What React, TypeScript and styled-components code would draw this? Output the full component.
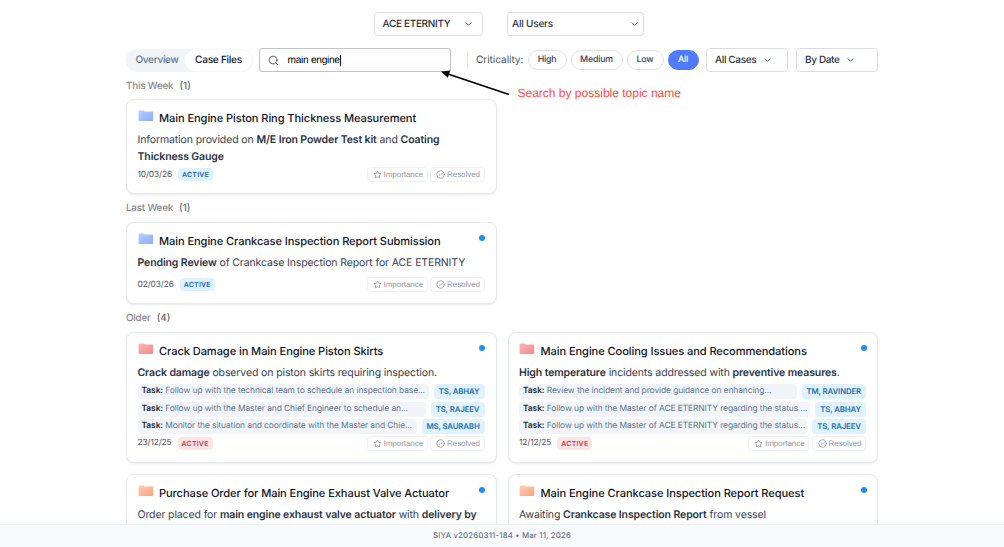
import React from 'react';
import styled, { createGlobalStyle } from 'styled-components';

const Global = createGlobalStyle`
  * { box-sizing: border-box; }
  html, body { margin: 0; padding: 0; }
  body {
    background: #fff;
    font-family: Inter, "Liberation Sans", sans-serif;
    color: #1f2937;
    overflow: hidden;
    -webkit-font-smoothing: antialiased;
    text-rendering: geometricPrecision;
  }
`;

const Page = styled.div`
  position: relative;
  height: 547px;
  display: flex;
  flex-direction: column;
  overflow: hidden;
`;

const Main = styled.main`
  flex: 1;
  min-height: 0;
  overflow: hidden;
  width: 752px;
  margin-left: 126px;
`;

const TopBar = styled.div`
  display: flex;
  gap: 24px;
  padding: 12px 0 0 247.5px;
  height: 48px;
`;

const Select = styled.div<{ $w: number; $pad: string; $ls?: number; $gap?: number }>`
  display: flex;
  align-items: center;
  justify-content: ${p => (p.$gap ? 'flex-start' : 'space-between')};
  gap: ${p => p.$gap ?? 0}px;
  width: ${p => p.$w}px;
  height: 24px;
  padding: ${p => p.$pad};
  border: 1px solid #d9dce2;
  border-radius: 3.5px;
  font-size: 10px;
  font-weight: 500;
  letter-spacing: ${p => p.$ls ?? 0}px;
  color: #2b303b;
  white-space: nowrap;
  svg { flex: none; }
`;

const Spacer = styled.span`
  flex: 1;
`;

const Toolbar = styled.div`
  display: flex;
  align-items: center;
  height: 24px;
`;

const Tabs = styled.div`
  display: flex;
  width: 127px;
  height: 23px;
  border-radius: 12px;
  background: #f1f5f9;
  margin-right: 6px;
`;

const Tab = styled.div<{ $active?: boolean }>`
  display: flex;
  align-items: center;
  justify-content: center;
  width: ${p => (p.$active ? 69 : 58)}px;
  padding: 0 0 1px ${p => (p.$active ? 0 : 4)}px;
  border-radius: 12px;
  background: ${p => (p.$active ? '#fff' : 'transparent')};
  border: 1px solid ${p => (p.$active ? '#f5f7fa' : 'transparent')};
  color: ${p => (p.$active ? '#12161f' : '#64748b')};
  font-size: 10.1px;
  letter-spacing: ${p => (p.$active ? -0.28 : -0.33)}px;
  font-weight: 500;
  white-space: nowrap;
`;

const Search = styled.div`
  display: flex;
  align-items: center;
  width: 192px;
  height: 24px;
  padding: 0 0 0 8px;
  border: 1px solid #bfc3c9;
  border-radius: 3px;
  font: 10.2px "Liberation Sans", Arial, sans-serif;
  letter-spacing: -0.3px;
  color: #000;
  svg { margin-right: 8.5px; }
`;

const Caret = styled.i`
  width: 1px;
  height: 11px;
  background: #111;
`;

const Divider = styled.div`
  width: 1px;
  height: 20px;
  background: #e5e7eb;
  margin: 0 8px 0 16px;
`;

const FilterLabel = styled.span`
  width: 51.5px;
  font-size: 10.1px;
  letter-spacing: -0.06px;
  color: #4b5563;
  white-space: nowrap;
`;

const Pill = styled.div<{ $w: number; $on?: boolean }>`
  display: flex;
  align-items: center;
  justify-content: center;
  width: ${p => p.$w}px;
  height: 20px;
  padding-bottom: 1px;
  margin-right: 4px;
  border-radius: 10px;
  border: 1px solid ${p => (p.$on ? '#4f7cff' : '#dfe3e9')};
  background: ${p => (p.$on ? '#4f7cff' : '#fff')};
  color: ${p => (p.$on ? '#fff' : '#374151')};
  font-size: 8.8px;
  letter-spacing: -0.2px;
  font-weight: 500;
`;

const GroupTitle = styled.h2<{ $h: number }>`
  display: flex;
  align-items: center;
  gap: 6px;
  height: ${p => p.$h}px;
  margin: 0;
  font-size: 9.9px;
  letter-spacing: -0.22px;
  font-weight: 500;
  color: #8a8a8e;
  span { color: #6b6b70; letter-spacing: 0; }
`;

const Grid = styled.div`
  display: grid;
  grid-template-columns: 370.5px 370.5px;
  gap: 11px;
`;

const CardBox = styled.article<{ $h: number }>`
  display: flex;
  flex-direction: column;
  height: ${p => p.$h}px;
  padding: 10px 11px 0 10.5px;
  border: 1px solid #e6e9ed;
  border-radius: 8px;
  background: #fff;
  box-shadow: 0 1px 2px rgba(0, 0, 0, 0.09);
`;

const CardHead = styled.header`
  display: flex;
  height: 17px;
`;

const CardTitle = styled.h3`
  flex: 1;
  margin: 0 0 0 5.5px;
  font-size: 11.1px;
  line-height: 17px;
  font-weight: 500;
  letter-spacing: -0.085px;
  color: #12161f;
  white-space: nowrap;
`;

const Dot = styled.i`
  width: 6px;
  height: 6px;
  margin: 2.5px -0.5px 0 0;
  border-radius: 50%;
  background: #1f8ff5;
`;

const Summary = styled.p<{ $mb: number }>`
  margin: 5px 0 ${p => p.$mb}px;
  font-size: 10.5px;
  line-height: 16.4px;
  letter-spacing: -0.115px;
  color: #374151;
  white-space: nowrap;
  b { font-weight: 600; color: #2a3342; }
`;

const TaskList = styled.div`
  display: flex;
  flex-direction: column;
  gap: 2.5px;
  padding: 0.8px 0 1.6px;
`;

const TaskRow = styled.div`
  display: flex;
  gap: 5px;
  height: 15px;
`;

const TaskText = styled.div`
  flex: 1;
  min-width: 0;
  padding-left: 4px;
  border-radius: 4px;
  background: #f1f5f9;
  font-size: 8.45px;
  letter-spacing: -0.1px;
  line-height: 15px;
  color: #64748b;
  white-space: nowrap;
  b { font-weight: 600; color: #1f2937; }
`;

const Owner = styled.div<{ $w: number }>`
  width: ${p => p.$w}px;
  border-radius: 4px;
  background: #e0f2fe;
  color: #1f6fae;
  font-size: 7.8px;
  letter-spacing: -0.12px;
  line-height: 15px;
  font-weight: 600;
  text-align: center;
  white-space: nowrap;
`;

const CardFoot = styled.footer`
  display: flex;
  align-items: center;
  height: 15px;
`;

const DateText = styled.span`
  font-size: 8.4px;
  letter-spacing: -0.12px;
  color: #52525b;
`;

const Status = styled.span<{ $red?: boolean }>`
  width: 35px;
  height: 13px;
  margin-left: 6px;
  border-radius: 4px;
  background: ${p => (p.$red ? '#fee4e6' : '#e0f2fe')};
  color: ${p => (p.$red ? '#d23a3f' : '#1d64c0')};
  font-size: 7px;
  font-weight: 600;
  line-height: 13px;
  letter-spacing: 0.2px;
  text-align: center;
`;

const Action = styled.div<{ $w: number }>`
  display: flex;
  align-items: center;
  width: ${p => p.$w}px;
  height: 15px;
  margin-left: 2.5px;
  padding-left: 5px;
  gap: 2px;
  border: 1px solid #eef0f3;
  border-radius: 3.5px;
  font: 8px "Liberation Sans", Arial, sans-serif;
  letter-spacing: -0.04px;
  color: #94969d;
  white-space: nowrap;
`;

const StatusBar = styled.footer`
  flex: none;
  display: flex;
  justify-content: center;
  height: 23px;
  line-height: 21px;
  background: #f8fafc;
  border-top: 1px solid #edf0f4;
  color: #64748b;
  font-size: 7.8px;
  font-weight: 500;
  letter-spacing: 0.18px;
`;

const Note = styled.div`
  position: absolute;
  left: 517.5px;
  top: 86px;
  font: 12px/14px "Liberation Sans", Arial, sans-serif;
  color: #ff4a3d;
  white-space: nowrap;
`;

const Arrow = styled.svg`
  position: absolute;
  left: 436px;
  top: 66px;
`;

const Chevron = () => (
  <svg width="7" height="6" viewBox="0 0 7 6" fill="none" stroke="#4b5563" strokeWidth="1" strokeLinecap="round" strokeLinejoin="round">
    <path d="M1 1.8 3.5 4.3 6 1.8" />
  </svg>
);

const folderColors = {
  blue: ['#b9ceff', '#8badff'],
  red: ['#fbb4b4', '#f58a8c'],
  orange: ['#fdcfb2', '#fba27c'],
};
type Tone = keyof typeof folderColors;

const Folder = ({ tone }: { tone: Tone }) => (
  <svg width="16" height="13" viewBox="0 0 16 13">
    <defs>
      <linearGradient id={`folder-${tone}`} x1="0" y1="0" x2="1" y2="1">
        <stop offset="0" stopColor={folderColors[tone][0]} />
        <stop offset="1" stopColor={folderColors[tone][1]} />
      </linearGradient>
    </defs>
    <path d="M.6 1.3a.9.9 0 0 1 .9-.9h4l1.3 1h7.6a.8.8 0 0 1 .8.8v7.9a.9.9 0 0 1-.9.9H1.5a.9.9 0 0 1-.9-.9z" fill={`url(#folder-${tone})`} />
  </svg>
);

type Task = { text: string; owner: string; w: number };
type CardProps = {
  tone: Tone;
  title: string;
  body: React.ReactNode;
  h: number;
  mb?: number;
  date?: string;
  unread?: boolean;
  tasks?: Task[];
};

const Card = ({ tone, title, body, h, mb = 2, date, unread, tasks }: CardProps) => (
  <CardBox $h={h}>
    <CardHead>
      <Folder tone={tone} />
      <CardTitle>{title}</CardTitle>
      {unread && <Dot />}
    </CardHead>
    <Summary $mb={mb}>{body}</Summary>
    {tasks && (
      <TaskList>
        {tasks.map(t => (
          <TaskRow key={t.text + t.owner}>
            <TaskText><b>Task:</b> {t.text}</TaskText>
            <Owner $w={t.w}>{t.owner}</Owner>
          </TaskRow>
        ))}
      </TaskList>
    )}
    {date && (
      <CardFoot>
        <DateText>{date}</DateText>
        <Status $red={tone === 'red'}>ACTIVE</Status>
        <Spacer />
        <Action $w={61}>
          <svg width="9" height="9" viewBox="0 0 24 24" fill="none" stroke="#8b8e96" strokeWidth="2" strokeLinejoin="round">
            <path d="M12 2.5l2.9 6.2 6.8.8-5 4.7 1.3 6.8-6-3.4-6 3.4 1.3-6.8-5-4.7 6.8-.8z" />
          </svg>
          Importance
        </Action>
        <Action $w={54.5}>
          <svg width="9" height="9" viewBox="0 0 24 24" fill="none" stroke="#8b8e96" strokeWidth="2" strokeLinecap="round">
            <circle cx="12" cy="12" r="10" />
            <path d="M8.5 12.5l2.3 2.2 4.7-5" />
          </svg>
          Resolved
        </Action>
      </CardFoot>
    )}
  </CardBox>
);

const SortSelect = styled(Select)`
  margin-left: 8px;
`;

export default function App() {
  return (
    <Page>
      <Global />
      <Main>
        <TopBar>
          <Select $w={109.5} $pad="0 10px 1px 8px" $ls={-0.32}>ACE ETERNITY<Chevron /></Select>
          <Select $w={137} $pad="0 5.5px 0 4px" $ls={-0.2}>All Users<Chevron /></Select>
        </TopBar>
        <Toolbar>
          <Tabs>
            <Tab>Overview</Tab>
            <Tab $active>Case Files</Tab>
          </Tabs>
          <Search>
            <svg width="11" height="11" viewBox="0 0 24 24" fill="none" stroke="#555" strokeWidth="2" strokeLinecap="round">
              <circle cx="11" cy="11" r="8.5" />
              <path d="M17.5 17.5 21.5 21.5" />
            </svg>
            main engine<Caret />
          </Search>
          <Divider />
          <FilterLabel>Criticality:</FilterLabel>
          <Pill $w={39}>High</Pill>
          <Pill $w={52}>Medium</Pill>
          <Pill $w={37}>Low</Pill>
          <Pill $w={31} $on>All</Pill>
          <Spacer />
          <Select $w={82} $pad="0 0 1px 8px" $ls={-0.36} $gap={7.5}>All Cases<Chevron /></Select>
          <SortSelect $w={82} $pad="0 0 1px 8px" $ls={-0.36} $gap={7.5}>By Date<Chevron /></SortSelect>
        </Toolbar>

        <GroupTitle $h={27.4}>This Week <span>(1)</span></GroupTitle>
        <Grid>
          <Card tone="blue" h={94.6} date="10/03/26"
            title="Main Engine Piston Ring Thickness Measurement"
            body={<>Information provided on <b>M/E Iron Powder Test kit</b> and <b>Coating<br />Thickness Gauge</b></>} />
        </Grid>
        <GroupTitle $h={28}>Last Week <span>(1)</span></GroupTitle>
        <Grid>
          <Card tone="blue" h={82} mb={6} unread date="02/03/26"
            title="Main Engine Crankcase Inspection Report Submission"
            body={<><b>Pending Review</b> of Crankcase Inspection Report for ACE ETERNITY</>} />
        </Grid>
        <GroupTitle $h={28}>Older <span>(4)</span></GroupTitle>
        <Grid>
          <Card tone="red" h={131} unread date="23/12/25"
            title="Crack Damage in Main Engine Piston Skirts"
            body={<><b>Crack damage</b> observed on piston skirts requiring inspection.</>}
            tasks={[
              { text: 'Follow up with the technical team to schedule an inspection base...', owner: 'TS, ABHAY', w: 51 },
              { text: 'Follow up with the Master and Chief Engineer to schedule an...', owner: 'TS, RAJEEV', w: 54 },
              { text: 'Monitor the situation and coordinate with the Master and Chie...', owner: 'MS, SAURABH', w: 63 },
            ]} />
          <Card tone="red" h={131} unread date="12/12/25"
            title="Main Engine Cooling Issues and Recommendations"
            body={<><b>High temperature</b> incidents addressed with <b>preventive measures</b>.</>}
            tasks={[
              { text: 'Review the incident and provide guidance on enhancing...', owner: 'TM, RAVINDER', w: 64.5 },
              { text: 'Follow up with the Master of ACE ETERNITY regarding the status ...', owner: 'TS, ABHAY', w: 51 },
              { text: 'Follow up with the Master of ACE ETERNITY regarding the status...', owner: 'TS, RAJEEV', w: 54 },
            ]} />
          <Card tone="orange" h={131} unread
            title="Purchase Order for Main Engine Exhaust Valve Actuator"
            body={<>Order placed for <b>main engine exhaust valve actuator</b> with <b>delivery by</b></>} />
          <Card tone="orange" h={131} unread
            title="Main Engine Crankcase Inspection Report Request"
            body={<>Awaiting <b>Crankcase Inspection Report</b> from vessel</>} />
        </Grid>
      </Main>
      <StatusBar>SIYA v20260311-184 • Mar 11, 2026</StatusBar>
      <Arrow width="76" height="32" viewBox="0 0 76 32">
        <path d="M73 28.5 12 8" stroke="#000" strokeWidth="1.8" />
        <path d="M5 5.5 14.2 4.6 11.8 11.8z" fill="#000" />
      </Arrow>
      <Note>Search by possible topic name</Note>
    </Page>
  );
}
